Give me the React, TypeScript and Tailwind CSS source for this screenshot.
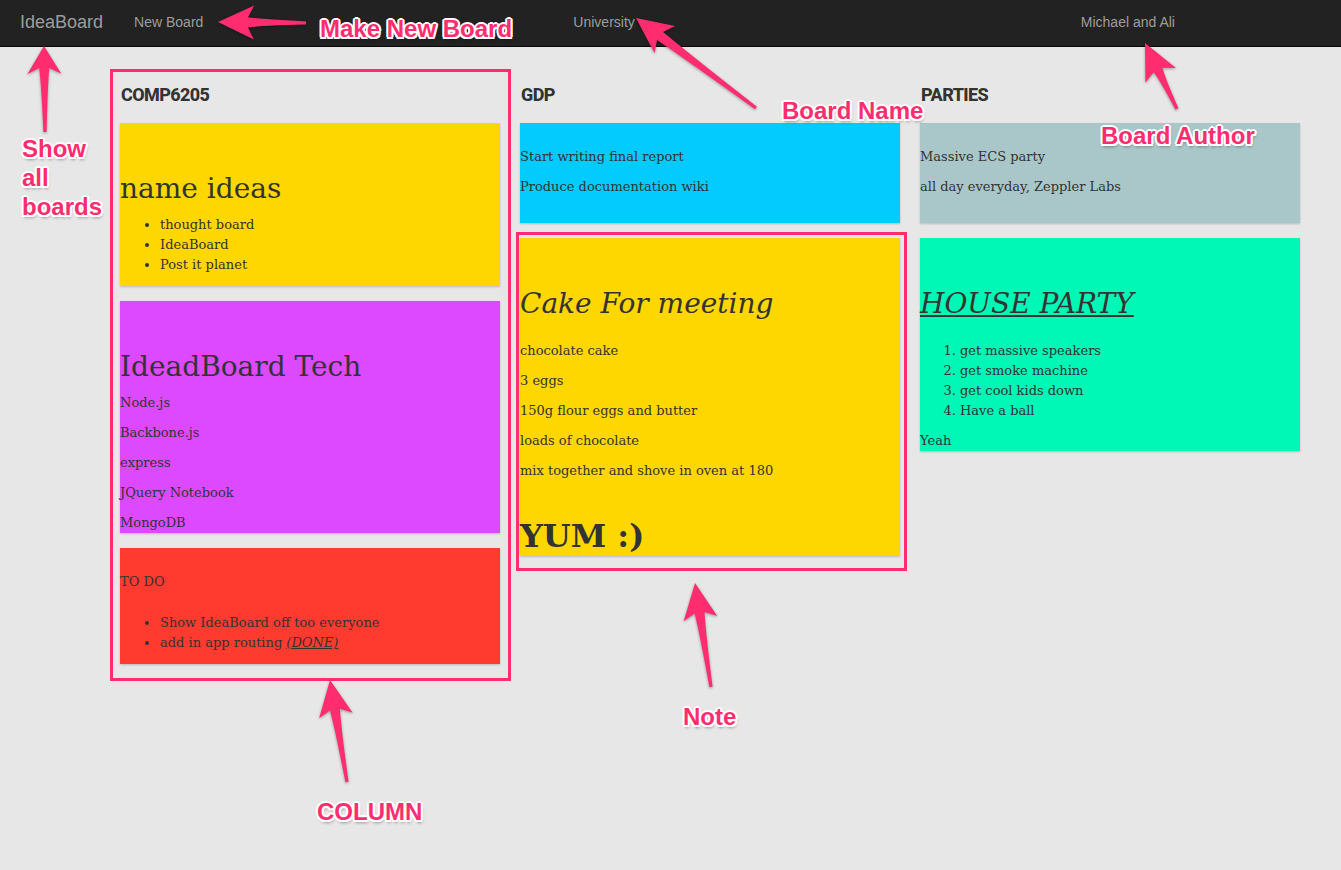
import React from "react"

const PINK = "#ff2d6f"

function Arrow({ x1, y1, x2, y2, head = 36 }: { x1: number; y1: number; x2: number; y2: number; head?: number }) {
  const len = Math.hypot(x2 - x1, y2 - y1)
  const angle = (Math.atan2(y2 - y1, x2 - x1) * 180) / Math.PI
  const d = `M0 -1.6 Q${len * 0.5} -3 ${len - head + 6} -5 L${len - head} -17 L${len} 0 L${len - head} 17 L${len - head + 6} 5 Q${len * 0.5} 3 0 1.6 Z`
  return <path d={d} fill={PINK} transform={`translate(${x1} ${y1}) rotate(${angle})`} />
}

function Label({ className, children }: { className: string; children: React.ReactNode }) {
  return (
    <div
      className={`absolute font-['Liberation_Sans',Arial,sans-serif] font-bold text-[24px] leading-[29px] text-[#ff2d6f] [text-shadow:-2px_0_0_#fff,2px_0_0_#fff,0_-2px_0_#fff,0_2px_0_#fff,-1.5px_-1.5px_0_#fff,1.5px_1.5px_0_#fff,-1.5px_1.5px_0_#fff,1.5px_-1.5px_0_#fff,1px_3px_3px_rgba(0,0,0,0.35)] ${className}`}
    >
      {children}
    </div>
  )
}

function Note({ bg, className, children }: { bg: string; className: string; children: React.ReactNode }) {
  return (
    <div className={`${bg} ${className} shadow-[0_1px_2px_rgba(0,0,0,0.2)] text-[#333] text-[13px] leading-[20px]`}>
      {children}
    </div>
  )
}

function Column({ title, children }: { title: string; children: React.ReactNode }) {
  return (
    <div className="w-[380px] flex flex-col">
      <h3 className="font-['Roboto',sans-serif] font-extrabold text-[18px] leading-[20px] tracking-[-0.6px] text-[#333] pl-[1px] mb-[18px]">
        {title}
      </h3>
      <div className="flex flex-col gap-[15px]">{children}</div>
    </div>
  )
}

export default function App() {
  return (
    <div className="relative min-h-[870px] w-full bg-[#e7e7e7] overflow-hidden">
      <nav className="h-[47px] bg-[#222] border-b border-[#080808] flex items-center pb-[2px] font-['Liberation_Sans',Arial,sans-serif] text-[#9d9d9d]">
        <span className="ml-[20px] text-[18px]">IdeaBoard</span>
        <span className="ml-[31px] text-[14px]">New Board</span>
        <span className="ml-[370px] text-[14px]">University</span>
        <span className="ml-[446px] text-[14px]">Michael and Ali</span>
      </nav>

      <main className="flex gap-[20px] pl-[120px] pt-[38px] font-['DejaVu_Serif',serif]">
        <Column title="COMP6205">
          <Note bg="bg-[#ffd700]" className="pt-[49px] pb-[11px]">
            <h1 className="text-[28px] leading-[33px]">name ideas</h1>
            <ul className="list-disc pl-[40px] mt-[10px]">
              <li>thought board</li>
              <li>IdeaBoard</li>
              <li>Post it planet</li>
            </ul>
          </Note>
          <Note bg="bg-[#dc49fe]" className="pt-[49px]">
            <h1 className="text-[28px] leading-[33px]">IdeadBoard Tech</h1>
            <div className="mt-[10px] flex flex-col gap-[10px]">
              <p>Node.js</p>
              <p>Backbone.js</p>
              <p>express</p>
              <p>JQuery Notebook</p>
              <p>MongoDB</p>
            </div>
          </Note>
          <Note bg="bg-[#ff3b30]" className="pt-[24px] pb-[11px]">
            <p>TO DO</p>
            <ul className="list-disc pl-[40px] mt-[21px]">
              <li>Show IdeaBoard off too everyone</li>
              <li>
                add in app routing <em className="underline">(DONE)</em>
              </li>
            </ul>
          </Note>
        </Column>

        <Column title="GDP">
          <Note bg="bg-[#04cbfd]" className="pt-[24px] pb-[26px] flex flex-col gap-[10px]">
            <p>Start writing final report</p>
            <p>Produce documentation wiki</p>
          </Note>
          <Note bg="bg-[#ffd700]" className="pt-[49px]">
            <h1 className="text-[28px] leading-[33px] italic">Cake For meeting</h1>
            <div className="mt-[21px] flex flex-col gap-[10px]">
              <p>chocolate cake</p>
              <p>3 eggs</p>
              <p>150g flour eggs and butter</p>
              <p>loads of chocolate</p>
              <p>mix together and shove in oven at 180</p>
            </div>
            <p className="mt-[35px] text-[32px] leading-[40px] font-bold">YUM :)</p>
          </Note>
        </Column>

        <Column title="PARTIES">
          <Note bg="bg-[#a9c6c8]" className="pt-[24px] pb-[26px] flex flex-col gap-[10px]">
            <p>Massive ECS party</p>
            <p>all day everyday, Zeppler Labs</p>
          </Note>
          <Note bg="bg-[#00f8b6]" className="pt-[49px]">
            <h1 className="text-[28px] leading-[33px] italic underline">HOUSE PARTY</h1>
            <ol className="list-decimal pl-[40px] mt-[21px]">
              <li>get massive speakers</li>
              <li>get smoke machine</li>
              <li>get cool kids down</li>
              <li>Have a ball</li>
            </ol>
            <p className="mt-[10px]">Yeah</p>
          </Note>
        </Column>
      </main>

      {/* annotation overlay */}
      <div className="absolute left-[110px] top-[69px] w-[401px] h-[612px] border-[3px] border-[#ff2d6f] pointer-events-none" />
      <div className="absolute left-[516px] top-[232px] w-[391px] h-[339px] border-[3px] border-[#ff2d6f] pointer-events-none" />

      <svg
        className="absolute inset-0 pointer-events-none [filter:drop-shadow(0_1px_1.5px_rgba(0,0,0,0.35))]"
        width="1341"
        height="870"
        viewBox="0 0 1341 870"
      >
        <Arrow x1={306} y1={23} x2={218} y2={22} />
        <Arrow x1={45} y1={132} x2={44} y2={46} head={28} />
        <Arrow x1={756} y1={108} x2={636} y2={18} />
        <Arrow x1={1177} y1={109} x2={1145} y2={43} />
        <Arrow x1={347} y1={782} x2={330} y2={680} />
        <Arrow x1={711} y1={687} x2={695} y2={583} />
      </svg>

      <Label className="left-[320px] top-[14px]">Make New Board</Label>
      <Label className="left-[782px] top-[96px]">Board Name</Label>
      <Label className="left-[1101px] top-[121px]">Board Author</Label>
      <Label className="left-[22px] top-[134px]">
        Show
        <br />
        all
        <br />
        boards
      </Label>
      <Label className="left-[317px] top-[797px]">COLUMN</Label>
      <Label className="left-[683px] top-[702px]">Note</Label>
    </div>
  )
}
